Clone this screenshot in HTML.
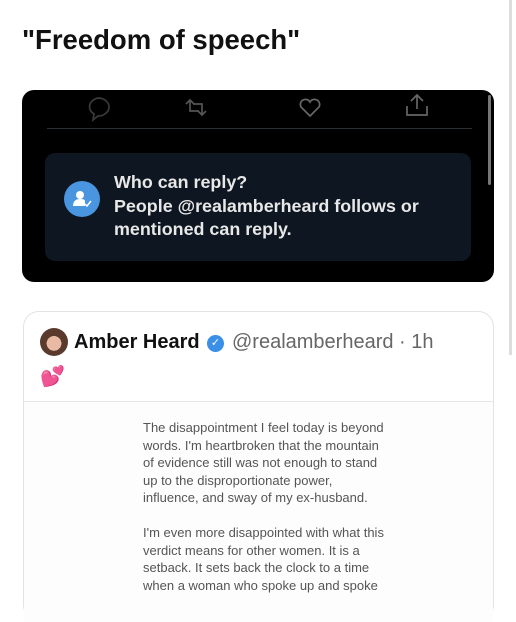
<!DOCTYPE html>
<html><head><meta charset="utf-8"><style>
*{margin:0;padding:0;box-sizing:border-box}
body{width:516px;height:600px;background:#fff;font-family:"Liberation Sans",sans-serif;position:relative;overflow:hidden}
.t{position:absolute;left:22px;top:24px;font-size:27.5px;font-weight:bold;color:#111}
.blk{position:absolute;left:22px;top:90px;width:472px;height:192px;background:#000;border-radius:12px}
.ln{position:absolute;left:25px;top:38px;width:425px;height:1px;background:#2a2f33}
.card{position:absolute;left:23px;top:63px;width:426px;height:108px;background:#0e1621;border-radius:10px}
.ic{position:absolute;left:19px;top:28px;width:36px;height:36px;border-radius:50%;background:#4a95e0}
.ct{position:absolute;left:69px;top:18px;color:#e8e8e8;font-weight:bold;font-size:17.9px;line-height:23.5px;white-space:nowrap}
.sb{position:absolute;left:466px;top:5px;width:3px;height:90px;background:#777;border-radius:2px}
.osb{position:absolute;left:509px;top:0;width:3px;height:355px;background:#ddd}
.tw{position:absolute;left:23px;top:311px;width:471px;height:310px;border:1px solid #e3e3e3;border-radius:16px}
.av{position:absolute;left:16px;top:16px;width:28px;height:28px;border-radius:50%;background:radial-gradient(circle at 50% 55%,#e8b9a3 0 35%,#5a3a2c 36%)}
.nm{position:absolute;left:50px;top:19px;font-size:20px;font-weight:bold;color:#111}
.hd{position:absolute;left:208px;top:19px;font-size:20px;color:#666}
.vf{position:absolute;left:183px;top:23px;width:17px;height:17px;border-radius:50%;background:#3a8fe6;color:#fff;font-size:11px;text-align:center;line-height:17px}
.dv{position:absolute;left:0;top:89px;width:469px;height:1px;background:#e6e6e6}
.img{position:absolute;left:0;top:90px;width:469px;height:220px;background:#fdfdfd}
.tx{position:absolute;left:119px;top:17px;font-size:13px;line-height:17.5px;color:#555;white-space:nowrap}
</style></head><body>
<div class="t">"Freedom of speech"</div>
<div class="osb"></div>
<div class="blk">
<svg style="position:absolute;left:0;top:0" width="472" height="40" fill="none" stroke-width="1.7">
<path d="M76 8a11 9 0 1 1 0 18l-5 4 1-6a11 9 0 0 1 4-16z" stroke="#3a3a3a"/>
<path d="M164 14l4-4 4 4M168 10v11h9M184 21l-4 4-4-4M180 25v-11h-9" stroke="#555"/>
<path d="M288 26l-9-9a5 5 0 0 1 9-5 5 5 0 0 1 9 5z" stroke="#666"/>
<path d="M395 5v14M389 11l6-6 6 6M385 16v9h20v-9" stroke="#666"/>
</svg>
<div class="ln"></div>
<div class="sb"></div>
<div class="card"><div class="ic"><svg width="36" height="36" fill="#fff"><circle cx="16" cy="14" r="4"/><path d="M9 25c0-5 3-7 7-7s5 1 5 2v5z"/><path d="M21 23l2 2 4-5" stroke="#fff" stroke-width="1.5" fill="none"/></svg></div>
<div class="ct">Who can reply?<br>People @realamberheard follows or<br>mentioned can reply.</div></div>
</div>
<div class="tw">
<div class="av"></div>
<div class="nm">Amber Heard</div>
<div class="vf">✓</div>
<div class="hd">@realamberheard · 1h</div>
<div style="position:absolute;left:16px;top:52px;font-size:20px;color:#e44fae">💕</div>
<div class="img"><div class="tx">The disappointment I feel today is beyond<br>words. I'm heartbroken that the mountain<br>of evidence still was not enough to stand<br>up to the disproportionate power,<br>influence, and sway of my ex-husband.<br><br>I'm even more disappointed with what this<br>verdict means for other women. It is a<br>setback. It sets back the clock to a time<br>when a woman who spoke up and spoke</div></div>
<div class="dv"></div>
</div>
</body></html>
